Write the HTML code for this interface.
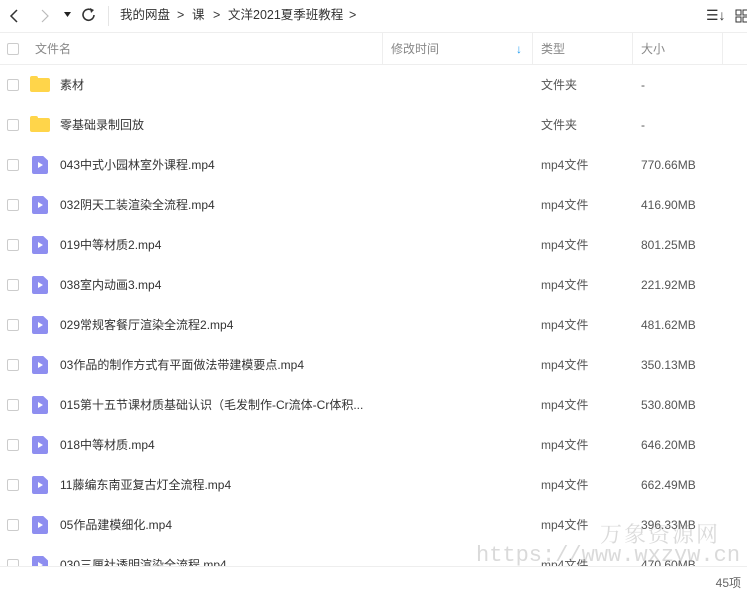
<!DOCTYPE html>
<html><head><meta charset="utf-8"><style>
*{margin:0;padding:0;box-sizing:border-box}
body{width:747px;height:592px;overflow:hidden;background:#fff;font-family:"Liberation Sans","Noto Sans CJK SC",sans-serif;font-size:12px;color:#333;position:relative}
.top{position:absolute;top:0;left:0;right:0;height:33px;border-bottom:1px solid #eee}
.top span{position:absolute;top:0;line-height:31px;font-size:12.5px;color:#333}
.hdr{position:absolute;top:33px;left:0;right:0;height:32px;border-bottom:1px solid #eee;color:#888}
.hdr div{position:absolute;top:0;line-height:32px}
.sep{position:absolute;top:33px;width:1px;height:32px;background:#eee}
.cb{position:absolute;left:7px;width:12px;height:12px;border:1px solid #ccc;border-radius:2px;background:#fff}
.row{position:absolute;left:0;right:0;height:40px}
.row .n,.row .t,.row .s{position:absolute;top:0;line-height:40px}
.row .n{left:60px}
.row .t{left:541px;color:#555}
.row .s{left:641px;color:#555}
.row .cb{top:14px}
.vid{position:absolute;left:32px;top:11px;width:16px;height:18px;background:#8e8ef0;border-radius:2px;clip-path:polygon(0 0,70% 0,100% 25%,100% 100%,0 100%)}
.vid:after{content:"";position:absolute;left:6px;top:6px;border-left:5px solid #fff;border-top:3px solid transparent;border-bottom:3px solid transparent}
.fold{position:absolute;left:30px;top:13px;width:20px;height:14px;background:#ffd54a;border-radius:2px}
.fold:before{content:"";position:absolute;left:0;top:-2px;width:8px;height:4px;background:#ffd54a;border-radius:2px 2px 0 0}
.foot{position:absolute;left:0;right:0;top:566px;height:26px;background:#fff;border-top:1px solid #eee}
.wm{position:absolute;color:rgba(150,150,150,.35);font-family:"Liberation Mono","Noto Sans CJK SC",monospace}
</style></head><body>
<div class="top">
<svg style="position:absolute;left:8px;top:8px" width="14" height="16"><path d="M9 2 L3 8 L9 14" stroke="#333" stroke-width="1.5" fill="none"/></svg>
<svg style="position:absolute;left:38px;top:8px" width="14" height="16"><path d="M4 2 L10 8 L4 14" stroke="#bbb" stroke-width="1.2" fill="none"/></svg>
<svg style="position:absolute;left:64px;top:12px" width="8" height="6"><path d="M0 0 L7 0 L3.5 5Z" fill="#222"/></svg>
<svg style="position:absolute;left:81px;top:7px" width="16" height="16"><path d="M13 8 A5.5 5.5 0 1 1 11 3.5" stroke="#333" stroke-width="1.6" fill="none"/><path d="M9 1 L13 3 L10 6Z" fill="#333"/></svg>
<div style="position:absolute;left:108px;top:6px;width:1px;height:20px;background:#e5e5e5"></div>
<span style="left:120px">我的网盘</span><span style="left:177px">&gt;</span><span style="left:192px">课</span><span style="left:213px">&gt;</span><span style="left:228px">文洋2021夏季班教程</span><span style="left:349px">&gt;</span>
<span style="left:706px;font-size:14px">☰↓</span>
<svg style="position:absolute;left:735px;top:9px" width="12" height="14"><rect x="1" y="1" width="5" height="5" fill="none" stroke="#333"/><rect x="8" y="1" width="5" height="5" fill="none" stroke="#333"/><rect x="1" y="8" width="5" height="5" fill="none" stroke="#333"/><rect x="8" y="8" width="5" height="5" fill="none" stroke="#333"/></svg>
</div>
<div class="hdr">
<div class="cb" style="top:10px"></div>
<div style="left:35px">文件名</div><div style="left:391px">修改时间</div><div style="left:516px;color:#1e9bf0;font-weight:bold">↓</div><div style="left:541px">类型</div><div style="left:641px">大小</div>
</div>
<div class="sep" style="left:382px"></div><div class="sep" style="left:532px"></div><div class="sep" style="left:632px"></div><div class="sep" style="left:722px"></div>

<div class="row" style="top:65px"><div class="cb"></div><div class="fold"></div><div class="n">素材</div><div class="t">文件夹</div><div class="s">-</div></div>
<div class="row" style="top:105px"><div class="cb"></div><div class="fold"></div><div class="n">零基础录制回放</div><div class="t">文件夹</div><div class="s">-</div></div>
<div class="row" style="top:145px"><div class="cb"></div><div class="vid"></div><div class="n">043中式小园林室外课程.mp4</div><div class="t">mp4文件</div><div class="s">770.66MB</div></div>
<div class="row" style="top:185px"><div class="cb"></div><div class="vid"></div><div class="n">032阴天工装渲染全流程.mp4</div><div class="t">mp4文件</div><div class="s">416.90MB</div></div>
<div class="row" style="top:225px"><div class="cb"></div><div class="vid"></div><div class="n">019中等材质2.mp4</div><div class="t">mp4文件</div><div class="s">801.25MB</div></div>
<div class="row" style="top:265px"><div class="cb"></div><div class="vid"></div><div class="n">038室内动画3.mp4</div><div class="t">mp4文件</div><div class="s">221.92MB</div></div>
<div class="row" style="top:305px"><div class="cb"></div><div class="vid"></div><div class="n">029常规客餐厅渲染全流程2.mp4</div><div class="t">mp4文件</div><div class="s">481.62MB</div></div>
<div class="row" style="top:345px"><div class="cb"></div><div class="vid"></div><div class="n">03作品的制作方式有平面做法带建模要点.mp4</div><div class="t">mp4文件</div><div class="s">350.13MB</div></div>
<div class="row" style="top:385px"><div class="cb"></div><div class="vid"></div><div class="n">015第十五节课材质基础认识（毛发制作-Cr流体-Cr体积...</div><div class="t">mp4文件</div><div class="s">530.80MB</div></div>
<div class="row" style="top:425px"><div class="cb"></div><div class="vid"></div><div class="n">018中等材质.mp4</div><div class="t">mp4文件</div><div class="s">646.20MB</div></div>
<div class="row" style="top:465px"><div class="cb"></div><div class="vid"></div><div class="n">11藤编东南亚复古灯全流程.mp4</div><div class="t">mp4文件</div><div class="s">662.49MB</div></div>
<div class="row" style="top:505px"><div class="cb"></div><div class="vid"></div><div class="n">05作品建模细化.mp4</div><div class="t">mp4文件</div><div class="s">396.33MB</div></div>
<div class="row" style="top:545px"><div class="cb"></div><div class="vid"></div><div class="n">030三厘社透明渲染全流程.mp4</div><div class="t">mp4文件</div><div class="s">470.60MB</div></div>
<div class="wm" style="left:600px;top:518px;font-size:22px;font-family:'Noto Serif CJK SC',serif;letter-spacing:2px">万象资源网</div>
<div class="wm" style="left:476px;top:543px;font-size:22px">https://www.wxzyw.cn</div>
<div class="foot"><span style="position:absolute;right:6px;top:7px;color:#666">45项</span></div>
</body></html>
